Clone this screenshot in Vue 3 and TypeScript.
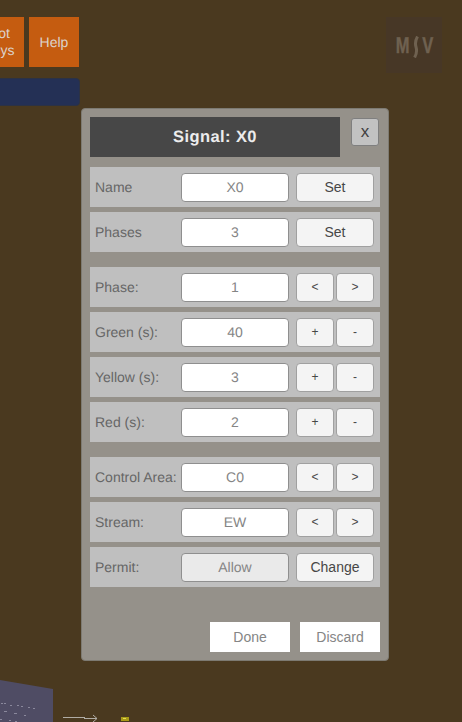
<script setup lang="ts">
interface Row { label: string; value: string; kind: 'set' | 'nav' | 'step' | 'change'; gapBefore?: boolean; dim?: boolean }
const rows: Row[] = [
  { label: 'Name', value: 'X0', kind: 'set' },
  { label: 'Phases', value: '3', kind: 'set' },
  { label: 'Phase:', value: '1', kind: 'nav', gapBefore: true },
  { label: 'Green (s):', value: '40', kind: 'step' },
  { label: 'Yellow (s):', value: '3', kind: 'step' },
  { label: 'Red (s):', value: '2', kind: 'step' },
  { label: 'Control Area:', value: 'C0', kind: 'nav', gapBefore: true },
  { label: 'Stream:', value: 'EW', kind: 'nav' },
  { label: 'Permit:', value: 'Allow', kind: 'change', dim: true },
]
</script>

<template>
  <div class="scene">
    <div class="top-btn partial">Hot<br />Keys</div>
    <div class="top-btn help">Help</div>
    <div class="blue-bar"></div>
    <div class="logo">
      <span class="logo-m">M</span>
      <svg class="logo-s" width="8" height="22" viewBox="0 0 8 22"><path d="M5.5 0.5 C3.5 4 2.8 7 4 11 C5.2 15 4.6 18 2.6 21.5" fill="none" stroke="#6f6150" stroke-width="3" /></svg>
      <span class="logo-v">V</span>
    </div>

    <svg class="ground" width="150" height="52" viewBox="0 0 150 52">
      <polygon points="0,10 53,19 53,52 0,52" fill="#4f4c64" />
      <g fill="#8a889c">
        <rect x="1" y="33" width="2" height="1" /><rect x="4" y="33" width="2" height="1" /><rect x="10" y="35" width="2" height="1" />
        <rect x="17" y="35" width="2" height="1" /><rect x="21" y="36" width="2" height="1" /><rect x="28" y="37" width="2" height="1" />
        <rect x="33" y="38" width="2" height="1" /><rect x="4" y="41" width="3" height="1" /><rect x="14" y="43" width="3" height="1" />
        <rect x="24" y="45" width="2" height="1" /><rect x="0" y="49" width="2" height="1" /><rect x="9" y="50" width="2" height="1" /><rect x="15" y="51" width="2" height="1" />
      </g>
      <path d="M63 47.5 H85 M84 48.5 H97 M93 45 L97 48.5 L93 52" fill="none" stroke="#b0aca4" stroke-width="1" />
      <rect x="121" y="47" width="8" height="4" fill="#a89a18" />
      <rect x="123" y="48" width="3" height="1" fill="#e6dc50" />
    </svg>

    <section class="panel">
      <header class="head">
        <h1 class="title">Signal: X0</h1>
        <button class="close">x</button>
      </header>

      <div class="rows">
        <div v-for="row in rows" :key="row.label" class="row" :class="{ spaced: row.gapBefore }">
          <span class="label">{{ row.label }}</span>
          <div class="field" :class="{ dim: row.dim }">{{ row.value }}</div>
          <div class="actions">
            <button v-if="row.kind === 'set'" class="btn wide">Set</button>
            <button v-else-if="row.kind === 'change'" class="btn wide">Change</button>
            <template v-else-if="row.kind === 'nav'">
              <button class="btn half">&lt;</button>
              <button class="btn half">&gt;</button>
            </template>
            <template v-else>
              <button class="btn half">+</button>
              <button class="btn half">-</button>
            </template>
          </div>
        </div>
      </div>

      <footer class="foot">
        <button class="foot-btn">Done</button>
        <button class="foot-btn">Discard</button>
      </footer>
    </section>
  </div>
</template>

<style>
html, body { margin: 0; background: #4a391f; }
</style>

<style scoped>
.scene {
  position: relative;
  width: 462px;
  height: 722px;
  overflow: hidden;
  background: #4a391f;
  font-family: "Liberation Sans", Arial, sans-serif;
  text-rendering: geometricPrecision;
}
.top-btn {
  position: absolute;
  top: 17px;
  height: 50px;
  background: #c55c10;
  color: #dcd3cb;
  font-size: 14px;
  line-height: 17px;
  display: flex;
  flex-direction: column;
  align-items: center;
  justify-content: center;
  text-align: center;
}
.partial { left: -26px; width: 50px; display: block; padding-top: 8px; height: 42px; }
.help { left: 29px; width: 50px; }
.blue-bar {
  position: absolute;
  left: -10px;
  top: 78px;
  width: 90px;
  height: 28px;
  box-sizing: border-box;
  background: #243055;
  border: 1px solid #2c3244;
  border-radius: 4px;
}
.logo {
  position: absolute;
  left: 386px;
  top: 17px;
  width: 56px;
  height: 56px;
  background: #473726;
  color: #6f6150;
  display: flex;
  align-items: center;
  justify-content: center;
  gap: 2px;
  font-weight: 700;
  font-size: 23px;
}
.logo-m, .logo-v { display: block; transform: scaleX(0.72); margin: 0 -2px; -webkit-text-stroke: 0.4px #6f6150; }
.logo-s { display: block; margin-top: 4px; }
.ground { position: absolute; left: 0; bottom: 0; }

.panel {
  position: absolute;
  left: 81px;
  top: 108px;
  width: 308px;
  height: 553px;
  box-sizing: border-box;
  padding: 8px 8px 0 8px;
  background: #95918a;
  border: 1px solid #7d7a72;
  border-radius: 4px;
  display: flex;
  flex-direction: column;
}
.head { display: flex; align-items: flex-start; }
.title {
  margin: 0;
  width: 250px;
  height: 40px;
  background: #474747;
  color: #ececec;
  font-size: 16.5px;
  font-weight: 700;
  line-height: 40px;
  text-align: center;
  letter-spacing: 0.4px;
}
.close {
  margin: 1px 0 0 11px;
  width: 28px;
  height: 28px;
  padding: 0;
  box-sizing: border-box;
  background: #c2c2c2;
  border: 1px solid #7f7f7f;
  border-radius: 3px;
  color: #404040;
  font-family: inherit;
  font-size: 17px;
  line-height: 24px;
}
.rows { margin-top: 10px; display: flex; flex-direction: column; gap: 5px; }
.row {
  width: 290px;
  height: 40px;
  box-sizing: border-box;
  background: #bfbfbf;
  padding-left: 5px;
  display: flex;
  align-items: center;
}
.row.spaced { margin-top: 10px; }
.label {
  width: 86px;
  color: #666;
  font-size: 14px;
  white-space: nowrap;
}
.field {
  width: 108px;
  height: 29px;
  margin-right: 7px;
  box-sizing: border-box;
  background: #fff;
  border: 1px solid #8f8f8f;
  border-radius: 4px;
  color: #858585;
  font-size: 14px;
  line-height: 27px;
  text-align: center;
}
.field.dim { background: #eaeaea; }
.actions { width: 78px; height: 29px; display: flex; justify-content: space-between; }
.btn {
  height: 29px;
  padding: 0;
  box-sizing: border-box;
  background: #f4f4f4;
  border: 1px solid #a0a0a0;
  border-radius: 4px;
  color: #474747;
  font-family: inherit;
  font-size: 14px;
}
.wide { width: 78px; }
.half { width: 38px; font-size: 12px; }
.foot {
  margin-top: auto;
  margin-bottom: 8px;
  display: flex;
  justify-content: flex-end;
  gap: 10px;
  width: 290px;
}
.foot-btn {
  width: 80px;
  height: 30px;
  padding: 0;
  background: #fff;
  border: none;
  color: #858585;
  font-family: inherit;
  font-size: 14px;
}
</style>
